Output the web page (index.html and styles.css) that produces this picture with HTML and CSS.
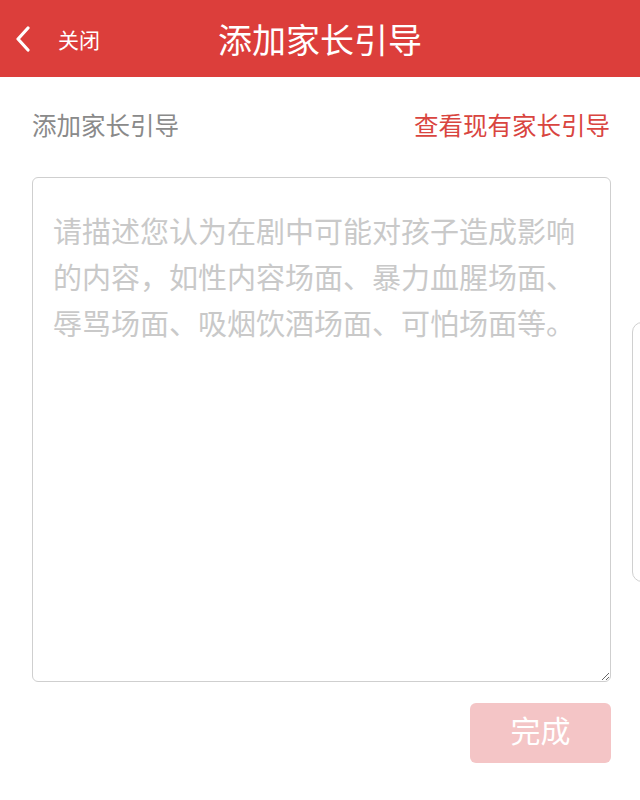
FILE: index.html
```html
<!DOCTYPE html>
<html lang="zh-CN">
<head>
    <meta charset="UTF-8">
    <meta name="viewport" content="width=device-width, initial-scale=1.0">
    <title>添加家长引导</title>
    <link rel="stylesheet" href="styles.css">
</head>
<body>
    <!-- Top bar -->
    <div class="top-bar">
        <a href="#" class="back">
            <svg class="back-icon" width="16" height="26" viewBox="0 0 16 26">
                <path d="M13 2 L3 13 L13 24" fill="none" stroke="#fff" stroke-width="3.2" stroke-linecap="round" stroke-linejoin="round"/>
            </svg>
            <span>关闭</span>
        </a>
        <h1>添加家长引导</h1>
        <div></div>
    </div>

    <!-- Form -->
    <div class="content">
        <div class="label-row">
            <span class="label">添加家长引导</span>
            <a href="#" class="view-link">查看现有家长引导</a>
        </div>
        <textarea class="guide-input" placeholder="请描述您认为在剧中可能对孩子造成影响的内容，如性内容场面、暴力血腥场面、辱骂场面、吸烟饮酒场面、可怕场面等。"></textarea>
        <div class="actions">
            <button class="done-btn" disabled>完成</button>
        </div>
    </div>

    <!-- Edge handle -->
    <div class="edge-handle"></div>
</body>
</html>
```
FILE: styles.css
```css
/* Global Styles */
* {
    margin: 0;
    padding: 0;
    box-sizing: border-box;
}

body {
    font-family: "Noto Sans CJK SC", "Noto Sans", sans-serif;
    background-color: #fff;
    color: #333;
    width: 640px;
    height: 800px;
    overflow: hidden;
    position: relative;
}

/* Top bar */
.top-bar {
    height: 77px;
    background-color: #dc3e3b;
    display: grid;
    grid-template-columns: 1fr auto 1fr;
    align-items: center;
}

.back {
    display: flex;
    align-items: center;
    padding-left: 15px;
    text-decoration: none;
    color: #fff;
    font-size: 21px;
}

.back-icon {
    margin-right: 27px;
}

.top-bar h1 {
    font-size: 34px;
    font-weight: normal;
    color: #fff;
    line-height: 1;
}

/* Content */
.content {
    padding: 31px 29px 0 32px;
}

.label-row {
    display: flex;
    justify-content: space-between;
    align-items: center;
    font-size: 24.5px;
    line-height: 34px;
}

.label {
    color: #8a8a8a;
}

.view-link {
    color: #d9453f;
    text-decoration: none;
    margin-right: 1px;
}

.guide-input {
    display: block;
    width: 579px;
    height: 505px;
    margin-top: 35px;
    padding: 29px 30px 20px 20px;
    border: 1px solid #cfcfcf;
    border-radius: 6px;
    font-family: inherit;
    font-size: 29px;
    line-height: 46px;
    color: #333;
    outline: none;
}

.guide-input::placeholder {
    color: #c9c9c9;
}

.actions {
    display: flex;
    justify-content: flex-end;
    margin-top: 21px;
}

.done-btn {
    width: 141px;
    height: 60px;
    padding-bottom: 9px;
    border: none;
    border-radius: 6px;
    background-color: #f4c5c6;
    color: #fff;
    font-family: inherit;
    font-size: 30px;
}

/* Edge handle */
.edge-handle {
    position: absolute;
    left: 632px;
    top: 322px;
    width: 24px;
    height: 260px;
    border: 1px solid #d0d0d0;
    border-radius: 10px;
    background-color: #fff;
}
```
